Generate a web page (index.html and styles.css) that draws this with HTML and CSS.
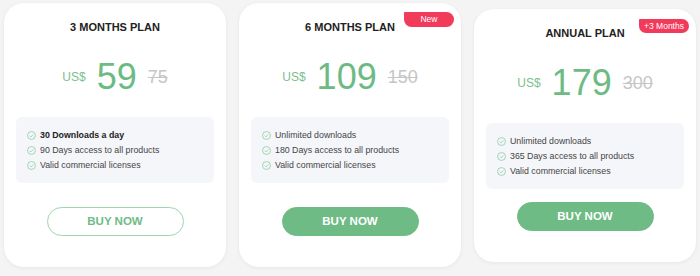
FILE: index.html
```html
<!DOCTYPE html>
<html lang="en">
<head>
<meta charset="UTF-8">
<meta name="viewport" content="width=device-width, initial-scale=1.0">
<title>Pricing Plans</title>
<link rel="stylesheet" href="styles.css">
</head>
<body>

<div class="plans">
    <div class="plan">
        <h3 class="plan-title">3 MONTHS PLAN</h3>
        <div class="price">
            <span class="currency">US$</span>
            <span class="amount">59</span>
            <span class="old-price">75</span>
        </div>
        <ul class="features">
            <li class="strong"><svg class="check" viewBox="0 0 10 10"><circle cx="5" cy="5" r="4.4"/><path d="M3 5.1l1.4 1.4L7.1 3.8"/></svg>30 Downloads a day</li>
            <li><svg class="check" viewBox="0 0 10 10"><circle cx="5" cy="5" r="4.4"/><path d="M3 5.1l1.4 1.4L7.1 3.8"/></svg>90 Days access to all products</li>
            <li><svg class="check" viewBox="0 0 10 10"><circle cx="5" cy="5" r="4.4"/><path d="M3 5.1l1.4 1.4L7.1 3.8"/></svg>Valid commercial licenses</li>
        </ul>
        <a href="#" class="btn btn-outline">BUY NOW</a>
    </div>

    <div class="plan">
        <span class="badge">New</span>
        <h3 class="plan-title">6 MONTHS PLAN</h3>
        <div class="price">
            <span class="currency">US$</span>
            <span class="amount">109</span>
            <span class="old-price">150</span>
        </div>
        <ul class="features">
            <li><svg class="check" viewBox="0 0 10 10"><circle cx="5" cy="5" r="4.4"/><path d="M3 5.1l1.4 1.4L7.1 3.8"/></svg>Unlimited downloads</li>
            <li><svg class="check" viewBox="0 0 10 10"><circle cx="5" cy="5" r="4.4"/><path d="M3 5.1l1.4 1.4L7.1 3.8"/></svg>180 Days access to all products</li>
            <li><svg class="check" viewBox="0 0 10 10"><circle cx="5" cy="5" r="4.4"/><path d="M3 5.1l1.4 1.4L7.1 3.8"/></svg>Valid commercial licenses</li>
        </ul>
        <a href="#" class="btn">BUY NOW</a>
    </div>

    <div class="plan plan-annual">
        <span class="badge">+3 Months</span>
        <h3 class="plan-title">ANNUAL PLAN</h3>
        <div class="price">
            <span class="currency">US$</span>
            <span class="amount">179</span>
            <span class="old-price">300</span>
        </div>
        <ul class="features">
            <li><svg class="check" viewBox="0 0 10 10"><circle cx="5" cy="5" r="4.4"/><path d="M3 5.1l1.4 1.4L7.1 3.8"/></svg>Unlimited downloads</li>
            <li><svg class="check" viewBox="0 0 10 10"><circle cx="5" cy="5" r="4.4"/><path d="M3 5.1l1.4 1.4L7.1 3.8"/></svg>365 Days access to all products</li>
            <li><svg class="check" viewBox="0 0 10 10"><circle cx="5" cy="5" r="4.4"/><path d="M3 5.1l1.4 1.4L7.1 3.8"/></svg>Valid commercial licenses</li>
        </ul>
        <a href="#" class="btn">BUY NOW</a>
    </div>
</div>

</body>
</html>
```

FILE: styles.css
```css
/* Global Styles */
body {
    margin: 0;
    background-color: #f4f4f4;
    font-family: "Liberation Sans", Arial, sans-serif;
}

.plans {
    display: flex;
    align-items: center;
    gap: 13px;
    padding: 3px 4px;
}

.plan {
    position: relative;
    flex: 0 0 222px;
    box-sizing: border-box;
    padding: 18px 12px 31px;
    background-color: #fff;
    border-radius: 20px;
    box-shadow: 0 1px 4px rgba(0, 0, 0, 0.06);
    text-align: center;
}

.plan-title {
    margin: 0;
    font-size: 11px;
    line-height: 13px;
    font-weight: bold;
    color: #222;
}

.badge {
    position: absolute;
    top: 9px;
    right: 7px;
    width: 50px;
    height: 15px;
    line-height: 15px;
    font-size: 8.5px;
    color: #fff;
    background-color: #f23a5b;
    border-radius: 1px 8px 8px 8px;
}

.plan-annual .badge {
    top: 10px;
    height: 14px;
    line-height: 14px;
}

.price {
    display: flex;
    justify-content: center;
    align-items: center;
    gap: 11px;
    margin-top: 25px;
    line-height: 1;
}

.currency {
    font-size: 12px;
    color: #7cc08f;
}

.amount {
    font-size: 36px;
    line-height: 36px;
    color: #6dbb84;
}

.old-price {
    font-size: 18px;
    color: #c6c6c6;
    text-decoration: line-through;
}

.features {
    list-style: none;
    margin: 22px 0 0;
    padding: 11px 11px 10px;
    background-color: #f5f6fa;
    border-radius: 6px;
    text-align: left;
    font-size: 8.8px;
    line-height: 15px;
    color: #444;
}

.features li {
    display: flex;
    align-items: center;
    gap: 4px;
}

.features li.strong {
    font-weight: bold;
    color: #222;
}

.check {
    width: 9px;
    height: 9px;
    flex: none;
    fill: none;
    stroke: #86c999;
    stroke-width: 0.8;
}

.btn {
    display: block;
    box-sizing: border-box;
    width: 137px;
    height: 29px;
    margin: 24px auto 0;
    line-height: 27px;
    border: 1px solid #6fbb85;
    border-radius: 15px;
    background-color: #6fbb85;
    color: #fff;
    font-size: 11.5px;
    font-weight: bold;
    text-decoration: none;
}

.btn-outline {
    background-color: #fff;
    border-color: #9fd5ae;
    color: #6fbb85;
}

.plan-annual .btn {
    margin-top: 13px;
}
```
